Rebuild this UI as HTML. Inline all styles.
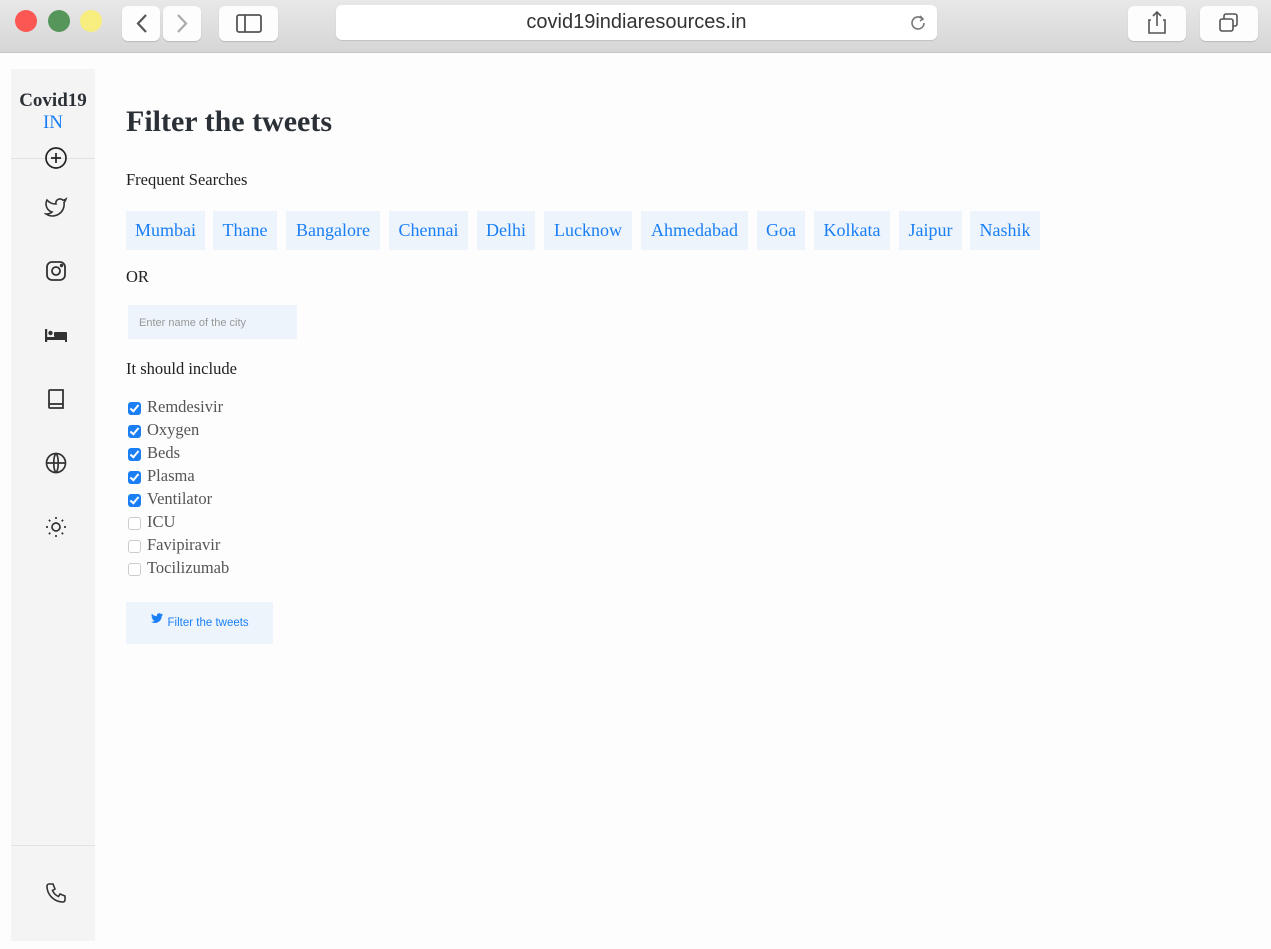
<!DOCTYPE html>
<html><head><meta charset="utf-8"><style>
*{box-sizing:border-box;margin:0;padding:0}
body{width:1271px;height:949px;background:#fdfdfd;font-family:"Liberation Serif",serif;position:relative;overflow:hidden;color:#222}
.bar{position:absolute;left:0;top:0;width:1271px;height:53px;background:linear-gradient(#e8e8e8,#d6d6d6);border-bottom:1px solid #c4c4c4}
.dot{position:absolute;top:10px;width:22px;height:22px;border-radius:50%}
.btn{position:absolute;top:6px;height:35px;background:#fdfdfd;border-radius:6px;box-shadow:0 1px 1px rgba(0,0,0,.15)}
.url{position:absolute;left:336px;top:5px;width:601px;height:35px;background:#fff;border-radius:6px;box-shadow:0 1px 1px rgba(0,0,0,.12);text-align:center;font:20px "Liberation Sans",sans-serif;color:#333;line-height:34px}
.side{position:absolute;left:11px;top:69px;width:84px;height:872px;background:#f4f4f4}
.ic{position:absolute;left:33px;width:24px;height:24px}
h1{position:absolute;left:126px;top:105px;font-size:30px;font-weight:bold;color:#2b3036}
.t{position:absolute;left:126px;font-size:16.5px;color:#222}
.chip{position:absolute;top:211px;height:39px;background:#edf4fc;color:#1a7ff5;font-size:18px;line-height:39px;text-align:center}
.cb{position:absolute;left:128px;font-size:16.5px;color:#555}
.cb i{position:absolute;left:0;top:2px;width:13px;height:13px;border-radius:3px}
.cb i.on{background:#1a7ff5}
.cb i.on:after{content:"";position:absolute;left:4px;top:1px;width:3px;height:7px;border:solid #fff;border-width:0 2px 2px 0;transform:rotate(40deg)}
.cb i.off{border:1px solid #ccc;background:#fff}
.cb span{position:absolute;left:19px;top:-3px;white-space:nowrap}
</style></head><body>
<div class="bar">
<div class="dot" style="left:15px;background:#fc5753"></div>
<div class="dot" style="left:48px;background:#57965a"></div>
<div class="dot" style="left:80px;background:#f7ee7f"></div>
<div class="btn" style="left:122px;width:38px"><svg width="38" height="35"><path d="M24 9l-8 8.5 8 8.5" fill="none" stroke="#555" stroke-width="2.2"/></svg></div>
<div class="btn" style="left:163px;width:38px"><svg width="38" height="35"><path d="M15 9l8 8.5-8 8.5" fill="none" stroke="#aaa" stroke-width="2.2"/></svg></div>
<div class="btn" style="left:219px;width:59px"><svg width="59" height="35"><rect x="18" y="9" width="24" height="17" rx="2" fill="none" stroke="#555" stroke-width="1.8"/><line x1="26" y1="9" x2="26" y2="26" stroke="#555" stroke-width="1.8"/></svg></div>
<div class="url">covid19indiaresources.in<svg style="position:absolute;right:8px;top:8px" width="20" height="20"><path d="M15 10a6 6 0 1 1-2-4.5" fill="none" stroke="#777" stroke-width="1.6"/><path d="M11 3l3 3-3 2" fill="none" stroke="#777" stroke-width="1.6"/></svg></div>
<div class="btn" style="left:1128px;width:58px"><svg width="58" height="35"><path d="M23 14h-2v13h16V14h-2M29 6v14M25 10l4-4 4 4" fill="none" stroke="#555" stroke-width="1.6"/></svg></div>
<div class="btn" style="left:1200px;width:58px"><svg width="58" height="35"><rect x="20" y="13" width="13" height="12" rx="2" fill="none" stroke="#555" stroke-width="1.6"/><path d="M24 13v-3a2 2 0 0 1 2-2h9a2 2 0 0 1 2 2v8a2 2 0 0 1-2 2h-2" fill="none" stroke="#555" stroke-width="1.6"/></svg></div>
</div>
<div class="side">
<div style="position:absolute;top:21px;width:84px;text-align:center;font-weight:bold;font-size:19px;color:#2b3036;line-height:22px">Covid19<br><span style="color:#1a7ff5;font-weight:normal">IN</span></div>
<div style="position:absolute;top:89px;width:84px;border-top:1px solid #e2e2e2"></div>
<svg class="ic" style="top:77px" viewBox="0 0 24 24" fill="none" stroke="#222" stroke-width="1.7"><circle cx="12" cy="12" r="10"/><path d="M12 7v10M7 12h10"/></svg>
<svg class="ic" style="top:126px" viewBox="0 0 24 24" fill="none" stroke="#333" stroke-width="1.6"><path d="M22 4s-.7 2.1-2 3.4c1.6 10-9.4 17.3-18 11.6 2.2.1 4.4-.6 6-2C3 15.5.5 9.6 3 5c2.2 2.6 5.6 4.1 9 4-.9-4.2 4-6.6 7-3.8 1.1 0 3-1.2 3-1.2z"/></svg>
<svg class="ic" style="top:190px" viewBox="0 0 24 24" fill="none" stroke="#333" stroke-width="1.8"><rect x="3" y="3" width="18" height="18" rx="5"/><circle cx="12" cy="12" r="4"/><circle cx="17.5" cy="6.5" r=".8" fill="#333"/></svg>
<svg class="ic" style="top:254px" viewBox="0 0 24 24" fill="#333"><rect x="1" y="6" width="2.2" height="13"/><rect x="1" y="14" width="22" height="3"/><rect x="21" y="12" width="2" height="7"/><circle cx="6.5" cy="10" r="2.2"/><rect x="10" y="9" width="13" height="5" rx="1"/></svg>
<svg class="ic" style="top:318px" viewBox="0 0 24 24" fill="none" stroke="#333" stroke-width="1.8"><path d="M5 4a1 1 0 0 1 1-1h13v18H6a1 1 0 0 1-1-1z"/><path d="M5 17h14"/></svg>
<svg class="ic" style="top:382px" viewBox="0 0 24 24" fill="none" stroke="#333" stroke-width="1.7"><circle cx="12" cy="12" r="9.5"/><path d="M2.5 12h19M12 2.5c3 3 3 16 0 19M12 2.5c-3 3-3 16 0 19"/></svg>
<svg class="ic" style="top:446px" viewBox="0 0 24 24" fill="none" stroke="#333" stroke-width="1.7"><circle cx="12" cy="12" r="4"/><path d="M12 2v2M12 20v2M2 12h2M20 12h2M4.9 4.9l1.4 1.4M17.7 17.7l1.4 1.4M4.9 19.1l1.4-1.4M17.7 6.3l1.4-1.4"/></svg>
<div style="position:absolute;top:776px;width:84px;border-top:1px solid #e2e2e2"></div>
<svg class="ic" style="top:812px" viewBox="0 0 24 24" fill="none" stroke="#333" stroke-width="1.6"><path d="M5 3h4l2 5-2.5 1.5a11 11 0 0 0 6 6L16 13l5 2v4a2 2 0 0 1-2 2A16 16 0 0 1 3 5a2 2 0 0 1 2-2"/></svg>
</div>
<h1>Filter the tweets</h1>
<div class="t" style="top:170px">Frequent Searches</div>
<div class="chip" style="left:126px;width:79px">Mumbai</div>
<div class="chip" style="left:213px;width:64px">Thane</div>
<div class="chip" style="left:286px;width:94px">Bangalore</div>
<div class="chip" style="left:389px;width:79px">Chennai</div>
<div class="chip" style="left:477px;width:58px">Delhi</div>
<div class="chip" style="left:544px;width:88px">Lucknow</div>
<div class="chip" style="left:641px;width:107px">Ahmedabad</div>
<div class="chip" style="left:757px;width:48px">Goa</div>
<div class="chip" style="left:814px;width:76px">Kolkata</div>
<div class="chip" style="left:899px;width:63px">Jaipur</div>
<div class="chip" style="left:970px;width:70px">Nashik</div>
<div class="t" style="top:267px">OR</div>
<div style="position:absolute;left:128px;top:305px;width:169px;height:34px;background:#edf4fc;font:11px 'Liberation Sans',sans-serif;color:#999;line-height:36px;padding-left:11px">Enter name of the city</div>
<div class="t" style="top:359px">It should include</div>
<div class="cb" style="top:400px"><i class="on"></i><span>Remdesivir</span></div>
<div class="cb" style="top:423px"><i class="on"></i><span>Oxygen</span></div>
<div class="cb" style="top:446px"><i class="on"></i><span>Beds</span></div>
<div class="cb" style="top:469px"><i class="on"></i><span>Plasma</span></div>
<div class="cb" style="top:492px"><i class="on"></i><span>Ventilator</span></div>
<div class="cb" style="top:515px"><i class="off"></i><span>ICU</span></div>
<div class="cb" style="top:538px"><i class="off"></i><span>Favipiravir</span></div>
<div class="cb" style="top:561px"><i class="off"></i><span>Tocilizumab</span></div>
<div style="position:absolute;left:126px;top:602px;width:147px;height:42px;background:#edf4fc;font:11.5px 'Liberation Sans',sans-serif;color:#1a7ff5;line-height:42px;text-align:center"><svg width="14" height="13" viewBox="0 0 24 24" style="vertical-align:1px"><path fill="#1a7ff5" d="M23 4.5c-.8.4-1.7.6-2.6.7.9-.6 1.6-1.4 2-2.5-.9.5-1.9.9-2.9 1.1a4.5 4.5 0 0 0-7.7 4.1C8 7.7 4.7 5.9 2.5 3.2c-1.2 2-.6 4.6 1.4 6-.7 0-1.4-.2-2-.6 0 2.2 1.5 4.100 3.6 4.5-.7.2-1.4.2-2 .1.6 1.8 2.3 3.1 4.2 3.1A9 9 0 0 1 1 18.2 12.8 12.8 0 0 0 20.7 7.4c.9-.7 1.7-1.5 2.3-2.4z"/></svg> Filter the tweets</div>
</body></html>
